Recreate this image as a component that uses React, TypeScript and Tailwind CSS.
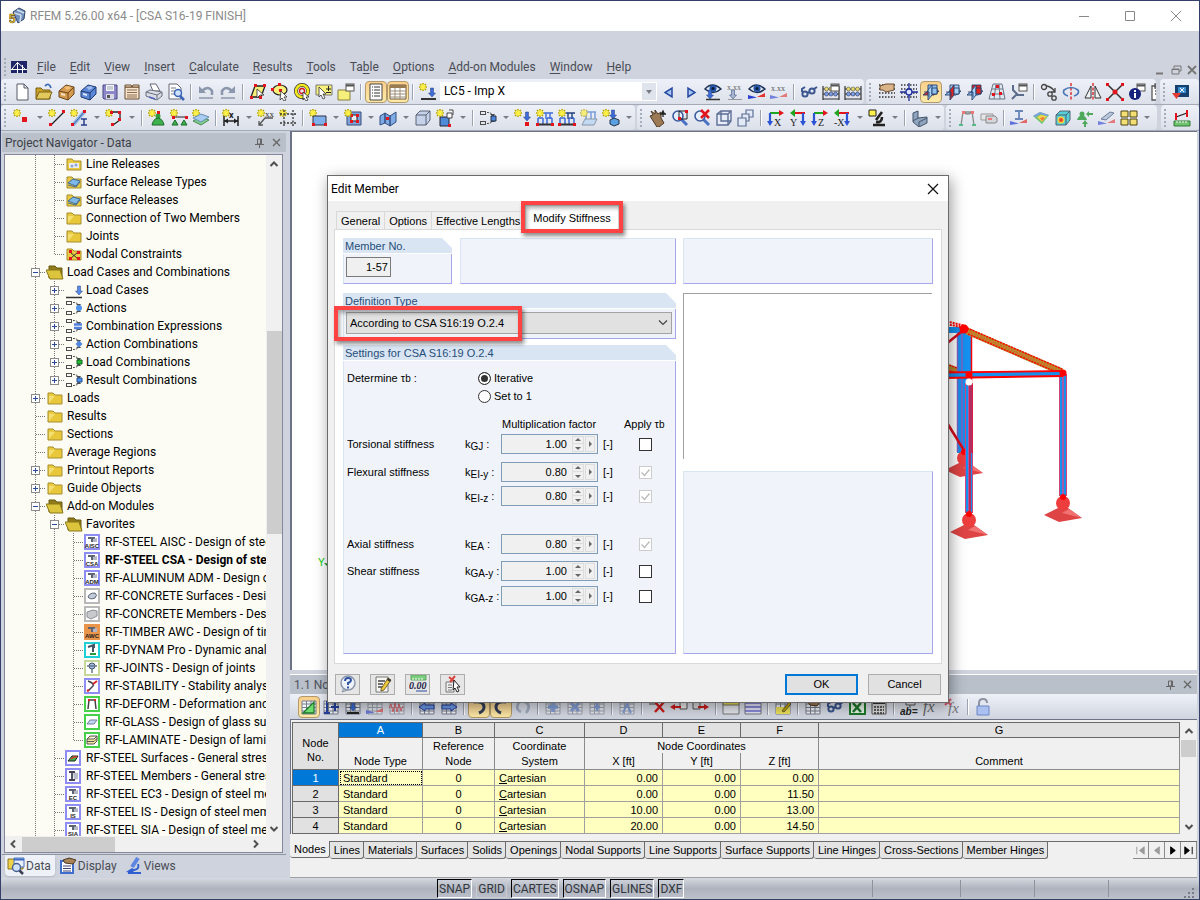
import { useState } from 'react'
import type { ReactNode } from 'react'
import clsx from 'clsx'

/* ---------- icon parts ---------- */

const star = (
  <g>
    <path d="M4 0v8M0 4h8M1 1l6 6M7 1L1 7" stroke="#b8a600" strokeWidth="1.6" />
    <path d="M4 1v6M1 4h6M2 2l4 4M6 2L2 6" stroke="#fff34a" strokeWidth="1.2" />
  </g>
)
const node = (x: number, y: number, fill = '#e3141b') => <rect x={x} y={y} width="3" height="3" fill={fill} />
const gridDots = <path d="M1 2h16M1 6h16M1 10h16M1 14h16" stroke="#333" strokeWidth="1.4" strokeDasharray="1.5 1.5" />
const downArrow = (x: number, y: number, fill = '#3d6bd8') => (
  <path d={`M${x - 1.5} ${y}h3v5h2l-3.5 4-3.5-4h2z`} fill={fill} stroke="#24407f" strokeWidth=".5" />
)
const abacus = (
  <g>
    <path d="M1 3v14M17 3v14M1 16h16M1 6h16M1 11h16" stroke="#333" strokeWidth="1.2" />
    <g fill="#e8d870" stroke="#554" strokeWidth=".6">
      <circle cx="4.5" cy="6" r="2" /><circle cx="9" cy="6" r="2" /><circle cx="13.5" cy="6" r="2" />
    </g>
    <g fill="#7aa0e8" stroke="#335" strokeWidth=".6">
      <circle cx="4.5" cy="11" r="2" /><circle cx="9" cy="11" r="2" /><circle cx="13.5" cy="11" r="2" />
    </g>
  </g>
)
const sheet = <path d="M2 3h14v13H2zM2 6h14M2 9.500h14M2 13h14M6.500 3v13M11 3v13" fill="#f2f4f8" stroke="#777d8c" />
const smallWindow = (
  <g>
    <rect x="9" y="1" width="8" height="7" fill="#fff" stroke="#555" />
    <path d="M9 2.500h8" stroke="#555" strokeWidth="2" />
  </g>
)
const truss = (fill: string) => (
  <g>
    <path d="M2 16V9M7 16V9M11 16V9M16 16V9M2 9h5M11 9h5" stroke="#3d6bd8" strokeWidth="1.5" fill="none" />
    <path d="M1 15.500h16" stroke="#333" strokeWidth="2" />
    <path d="M8 4h9M10 4v6M14 4v6" stroke={fill} strokeWidth="1.4" />
    {node(0, 14)}
    {node(15, 14)}
  </g>
)
// three crossing work planes, one of them marked red
const planes = (back: string, floor: string, side: string) => (
  <g stroke="#25406e" strokeWidth=".9">
    <path d="M6 2h9v9H6z" fill={back} />
    <path d="M1 12l5-4h11l-5 4z" fill={floor} />
    <path d="M6 7l4-5v10l-4 5z" fill={side} />
    <path d="M10 5h5v6h-5z" fill={back} />
    <path d="M2 9h5v5" fill="none" />
  </g>
)
const axes = (letter: string, flip = false) => (
  <g>
    <path d={flip ? 'M16 4H5' : 'M3 4h11'} stroke={flip ? '#e3141b' : '#1fa51f'} strokeWidth="2.200" />
    <path d={flip ? 'M6 0L1 4l5 4z' : 'M12 1l5 3-5 3z'} fill={flip ? '#1fa51f' : '#e3141b'} />
    <path d={flip ? 'M14 4v9' : 'M3 4v9'} stroke="#2b54d6" strokeWidth="2.200" />
    <path d={flip ? 'M11 12h6l-3 5z' : 'M0 12h6l-3 5z'} fill="#2b54d6" />
    <text x={flip ? 1 : 7} y="17" fontSize="10" fontFamily="Liberation Serif, serif" fill="#222">{letter}</text>
  </g>
)
const magnifier = (
  <g>
    <path d="M10 10l6 6" stroke="#4a72c4" strokeWidth="3" />
    <circle cx="7" cy="7" r="5" fill="#e6f0fc" stroke="#3c5b9e" strokeWidth="1.600" />
  </g>
)
const comboBoxes = (
  <g fill="none" stroke="#4c4c4c">
    <rect x="1.500" y="2.500" width="5" height="3" />
    <rect x="1.500" y="12.500" width="5" height="3" />
    <path d="M8 3.500q4 0 5 2M8 14.500q4 0 5-2" strokeDasharray="2 1" />
    <path d="M11 5h5l-2 3zM11 13h5l-2-3z" fill="#4c4c4c" stroke="none" />
  </g>
)
const eye = (
  <g>
    <path d="M1 6q7-8 16 0-8 7-16 0z" fill="#dfe8f5" stroke="#1d3154" strokeWidth="1.500" />
    <circle cx="9" cy="5.500" r="3.500" fill="#2456a8" />
    <circle cx="9" cy="5.500" r="1.500" fill="#0b1a35" />
  </g>
)
const ramp = (
  <g>
    <path d="M0 16v-4l9 2.500z" fill="#2b3fd6" />
    <path d="M9 14l8-4v4z" fill="#e3342f" />
  </g>
)
const cube = (fill: string) => (
  <g stroke="#4b5666" strokeWidth=".9">
    <path d="M2 6l4-4h10v9l-4 5H2z" fill={fill} />
    <path d="M2 6h10v10M12 6l4-4" fill="none" />
  </g>
)
const binoculars = (
  <g fill="none" stroke="#3c5690" strokeWidth="2">
    <circle cx="5" cy="11" r="2.600" /><circle cx="12" cy="8" r="2.600" />
    <path d="M7 10l3-1M2 9V6l3-2M14 6l3-2" />
  </g>
)

const icons: Record<string, ReactNode> = {
  blank: <path d="M4 1h7l4 4v12H4zM11 1v4h4" fill="#fff" stroke="#555b66" />,
  open: (
    <>
      <path d="M1 5h5l2 2h7v9H1z" fill="#c9a227" stroke="#7a6015" />
      <path d="M1 16l3-7h13l-3 7z" fill="#e2c95c" stroke="#7a6015" />
      <path d="M10 3q4-4 6 2" fill="none" stroke="#3e6bb5" strokeWidth="1.800" />
    </>
  ),
  cabinet: (
    <>
      <path d="M2 8l7-6 8 2v7l-6 6-9-3z" fill="#d69a4e" stroke="#69451b" />
      <path d="M2 8l9 2v7M11 10l6-6" stroke="#69451b" fill="none" />
      <path d="M4 10l4 1v2l-4-1z" fill="#f7e3c4" />
      <path d="M7 4l5-1 2 2-4 2z" fill="#f0c078" />
    </>
  ),
  cabinetBlue: (
    <>
      <path d="M2 8l7-6 8 2v7l-6 6-9-3z" fill="#5c86d6" stroke="#1f3a73" />
      <path d="M2 8l9 2v7M11 10l6-6" stroke="#1f3a73" fill="none" />
      <path d="M4 10l4 1v2l-4-1z" fill="#dbe6fb" />
      <path d="M7 4l5-1 2 2-4 2z" fill="#9dbcf0" />
    </>
  ),
  save: (
    <>
      <path d="M2 2h14v14H3l-1-1z" fill="#8d87c9" stroke="#4a4680" />
      <path d="M5 2h8v6H5z" fill="#f4f6fa" />
      <path d="M5 11h8v5H5z" fill="#d7d9e4" />
      <path d="M6 12h3v3H6z" fill="#555" />
      <path d="M6 4h6M6 6h6" stroke="#9aa" />
    </>
  ),
  report: (
    <>
      <path d="M2 4h14v12H2z" fill="#f6e6d0" stroke="#6b4a2c" />
      <path d="M2 4V2h6l1 2 1-2h6v2z" fill="#f6e6d0" stroke="#6b4a2c" />
      <path d="M4 7h10M4 9.500h10M4 12h10M4 14h10" stroke="#8b6a4c" />
    </>
  ),
  print: (
    <>
      <path d="M5 1h6l4 7H8z" fill="#fff" stroke="#667" />
      <path d="M1 9l4-2 12 2v4l-5 4-11-4z" fill="#d9dce4" stroke="#6a6f7e" />
      <path d="M1 9l11 3v4M12 12l5-3" stroke="#6a6f7e" fill="none" />
      <path d="M4 14l6 2" stroke="#5060c0" strokeWidth="1.500" />
    </>
  ),
  preview: (
    <>
      <path d="M2 1h8l4 4v11H2z" fill="#fff" stroke="#667" />
      <path d="M4 5h5M4 8h4M4 11h4" stroke="#778" />
      <path d="M13 13l4 4" stroke="#3b64b8" strokeWidth="2.500" />
      <circle cx="11" cy="10" r="3.500" fill="#cfe2fb" stroke="#3b64b8" strokeWidth="1.500" />
    </>
  ),
  undo: (
    <>
      <path d="M2 3v7h7z" fill="#8b97ad" />
      <path d="M5 8q6-6 10 0v4" fill="none" stroke="#8b97ad" strokeWidth="2.500" />
      <path d="M2 15h14" stroke="#a2aabb" strokeWidth="2" />
    </>
  ),
  redo: (
    <>
      <path d="M16 3v7H9z" fill="#8b97ad" />
      <path d="M13 8Q7 2 3 8v4" fill="none" stroke="#8b97ad" strokeWidth="2.500" />
      <path d="M2 15h14" stroke="#a2aabb" strokeWidth="2" />
    </>
  ),
  selPoly: (
    <>
      <path d="M6 3h10l-4 11H2z" fill="#f6ef7a" stroke="#222" strokeWidth="1.300" />
      {node(5, 1)}{node(14, 1)}{node(1, 13)}{node(10, 13)}
      <path d="M8 6l7 6h-4l-3 3z" fill="#fff" stroke="#333" strokeWidth=".8" />
    </>
  ),
  selEllipse: (
    <>
      <ellipse cx="9" cy="7" rx="7" ry="5" fill="#f6ef7a" stroke="#222" strokeWidth="1.200" />
      {node(7, 0)}{node(0, 5)}{node(8, 6)}
      <path d="M10 8l6 6h-3l2 3-2 1-2-3-2 2z" fill="#fff" stroke="#333" strokeWidth=".8" />
    </>
  ),
  selRing: (
    <>
      <circle cx="9" cy="8" r="6" fill="none" stroke="#333" strokeWidth="4" />
      <circle cx="9" cy="8" r="6" fill="none" stroke="#f2e61c" strokeWidth="2.600" />
      <circle cx="9" cy="8" r="2.500" fill="none" stroke="#e3141b" strokeWidth="1.300" />
      <path d="M10 9l6 5h-3l2 3-2 1-2-3-1 2z" fill="#fff" stroke="#333" strokeWidth=".8" />
    </>
  ),
  selBox: (
    <>
      <path d="M1 2h16v10H1z" fill="#f6ef7a" stroke="#777" />
      <path d="M11 6h5M13.500 3v5M11 9.500h5" stroke="#222" />
      <path d="M4 4l7 7H8l2 4-2 1-2-4-2 2z" fill="#fff" stroke="#333" strokeWidth=".8" />
    </>
  ),
  windows: (
    <>
      <path d="M1 7h12v10H1z" fill="#f6ef7a" stroke="#86813b" />
      {smallWindow}
    </>
  ),
  list: (
    <>
      <path d="M3 1h12v16H3z" fill="#fff" stroke="#444" />
      <path d="M7 4h6M7 7h6M7 10h6M7 13h6" stroke="#333" />
      <path d="M5 4h1M5 7h1M5 10h1M5 13h1" stroke="#333" />
    </>
  ),
  tableView: (
    <>
      <path d="M1 2h16v14H1z" fill="#fff" stroke="#6d563a" />
      <path d="M1 2h16v3H1z" fill="#9a7a50" />
      <path d="M1 8h16M1 11h16M1 14h16M6 5v11M11 5v11" stroke="#9b8d78" />
    </>
  ),
  loadCase: <>{star}{downArrow(13, 5)}<path d="M2 16h15" stroke="#333" strokeWidth="2" /></>,
  prev: <path d="M12 5v9L5 9.500z" fill="#a9c6f6" stroke="#2448a0" strokeWidth="1.500" />,
  next: <path d="M6 5v9l7-4.500z" fill="#a9c6f6" stroke="#2448a0" strokeWidth="1.500" />,
  eyeLoad: <>{eye}{downArrow(6, 7)}<path d="M2 16.500h14" stroke="#333" strokeWidth="1.500" /></>,
  xxLoad: (
    <>
      <text x="1" y="7" fontSize="8" fontFamily="Liberation Serif, serif" fill="#666">x.xx</text>
      {downArrow(7, 7, '#a9b5cc')}
      <path d="M2 16.500h14" stroke="#999" />
    </>
  ),
  eyeRamp: <>{eye}{ramp}</>,
  xxRamp: (
    <>
      <text x="1" y="8" fontSize="8" fontFamily="Liberation Serif, serif" fill="#555">x.xx</text>
      <g opacity=".6">{ramp}</g>
    </>
  ),
  binoculars,
  abacusWin: <>{abacus}{smallWindow}</>,
  abacus,
  gridHand: <>{gridDots}<path d="M2 3l6-2h8v6l-8 2-3-2H2z" fill="#d9b48a" stroke="#6b4c2c" /></>,
  gridCross: <>{gridDots}<path d="M9 0v18M0 9h18" stroke="#1d2c9a" strokeWidth="1.300" /><circle cx="9" cy="9" r="3" fill="#dfe6ff" stroke="#1d2c9a" strokeWidth="1.300" /></>,
  planeA: planes('#8ec1ee', '#e3241f', '#a9d0f5'),
  planeB: planes('#a9d0f5', '#8ec1ee', '#e3241f'),
  planeC: planes('#e3241f', '#8ec1ee', '#a9d0f5'),
  gridSkew: (
    <>
      <path d="M5 1h9l3 15H1zM4 6h11M3 11h13M8 1L6 16M11 1l1 15" fill="#dfe9f2" stroke="#6c7686" />
      {node(8, 2)}{node(4, 10)}{node(11, 9)}
    </>
  ),
  settings: <>{smallWindow}<path d="M3 2v5l5 5M2 16l4-4h8" fill="none" stroke="#5a6b8c" strokeWidth="2" /></>,
  copyNode: (
    <g fill="none" stroke="#444" strokeWidth="1.300">
      <circle cx="4" cy="4" r="2.500" /><circle cx="10" cy="11" r="2.200" /><circle cx="14" cy="15" r="2.200" />
      <path d="M7 3q5 1 8 6M15 5v4h-4" />
    </g>
  ),
  rotate: (
    <>
      <path d="M9 0v18" stroke="#d33" strokeDasharray="3 1.500" strokeWidth="1.500" />
      <path d="M6 13Q0 11 2 7q7-5 14 0 2 4-4 6" fill="none" stroke="#4f78b8" strokeWidth="1.700" />
    </>
  ),
  mirror: (
    <>
      <path d="M9 0v18" stroke="#d33" strokeDasharray="3 1.500" strokeWidth="1.500" />
      <path d="M7 3v12H1zM11 3v12h6z" fill="#f0f2f6" stroke="#333" />
    </>
  ),
  split: <><path d="M2 2l14 14M16 2L2 16" stroke="#333" strokeWidth="1.500" />{node(0, 0)}{node(15, 0)}{node(0, 15)}{node(15, 15)}<circle cx="9" cy="9" r="2.500" fill="#e3141b" /></>,
  info: (
    <>
      {smallWindow}
      <circle cx="7" cy="11" r="6" fill="#17227c" />
      <path d="M7 7v2M7 10v5" stroke="#fff" strokeWidth="2" />
    </>
  ),
  clip: <path d="M4 3h12v14H4zM7 1h6v4H7zM7 8h7M7 11h7" fill="#fff" stroke="#555" strokeWidth="1.300" />,
  screen: <><path d="M3 2h14v12H3z" fill="#16406e" /><path d="M6 4h8v6H6z" fill="#3d8fd0" /><path d="M8 5l4 4M12 5L8 9" stroke="#fff" /><path d="M0 10h9l-4.500 6z" fill="#e33a33" /></>,
  nodeNew: <>{star}<rect x="9" y="8" width="5" height="5" fill="#e3141b" /></>,
  lineNew: <>{star}<path d="M3 16L16 3" stroke="#222" strokeWidth="1.300" />{node(1, 14)}{node(14, 1)}</>,
  memberNew: (
    <>
      {star}
      <path d="M3 16L15 2" stroke="#8fb4e8" strokeWidth="3.500" />
      <path d="M3 16L15 2" stroke="#3b5f9e" />
      {node(1, 14)}{node(13, 1)}
      <path d="M11 10h6M14 10v6M11 16h6" stroke="#2b3f8a" strokeWidth="1.500" />
    </>
  ),
  polyNew: <>{star}<path d="M6 3h9v8l-7 5" fill="none" stroke="#222" strokeWidth="1.300" />{node(5, 2)}{node(13, 2)}{node(13, 9)}{node(6, 14)}</>,
  supportNew: <>{star}<circle cx="10" cy="7" r="2.500" fill="#2f9e3f" /><path d="M4 16q1-6 6-7 5 1 6 7z" fill="#3fb04e" stroke="#1b6b28" />{node(9, 2)}</>,
  lineSupport: <>{star}<path d="M3 8h13" stroke="#222" />{node(2, 7)}{node(15, 7)}<path d="M2 16l3-5 3 5zM11 16l3-5 3 5z" fill="#3fb04e" stroke="#1b6b28" /></>,
  surfSupport: <>{star}<path d="M1 12l8-4 8 3-8 5z" fill="#7fcf8a" stroke="#4e8a58" /><path d="M1 9l8-4 8 3-8 5z" fill="#a8cdf0" stroke="#6a8fb6" /></>,
  dimNew: <>{star}<path d="M2 7v10M16 7v10M2 12h14" stroke="#222" strokeWidth="1.500" /><path d="M2 12l4-2.500v5zM16 12l-4-2.500v5z" fill="#222" /><text x="7" y="9" fontSize="9" fontWeight="bold" fill="#222">x</text></>,
  commentNew: <>{star}<text x="8" y="8" fontSize="9" fontFamily="Liberation Serif, serif" fill="#333">xx</text><path d="M16 9H8l-6 7M2 12v4h4" fill="none" stroke="#555" strokeWidth="1.300" /></>,
  guideNew: <>{star}<path d="M5 1v16M14 1v16M1 5h16M1 14h16" stroke="#333" strokeWidth="1.300" strokeDasharray="2 1.500" /></>,
  surfNew: <>{star}<path d="M4 7h13v9H4z" fill="#7fb0ec" stroke="#334" />{node(15, 14)}{node(3, 14)}</>,
  openingNew: <><path d="M3 3h14v13H3z" fill="#7da4dc" stroke="#3b4f78" /><path d="M7 6h6v6H7z" fill="#e7eefa" stroke="#222" />{node(6, 5)}{node(12, 5)}{node(6, 11)}{node(12, 11)}{star}</>,
  foldNew: <><path d="M1 7l5-3v10l-5 2zM6 4l5 3v10l-5-3zM11 7l6-4v10l-6 4z" fill="#7fabe4" stroke="#334d80" />{node(7, 8)}</>,
  solid: cube('#c5d2ea'),
  solidNew: <><path d="M4 8h9v9H4z" fill="#4f8ad8" stroke="#223" /><path d="M11 4h5v5h-5zM13 1h4v5" fill="#fff" stroke="#444" />{node(12, 15)}{star}</>,
  combo: <>{comboBoxes}<path d="M12 7h5v5h-5z" fill="#4f86e0" stroke="#234" /></>,
  nodalLoad: <>{star}{downArrow(13, 3)}<rect x="11" y="13" width="4" height="4" fill="#e3141b" /></>,
  memberLoad: <>{truss('#3d6bd8')}{star}</>,
  memberLoad2: <>{truss('#24407f')}{star}</>,
  surfLoad: <g opacity=".7"><path d="M4 3h12M6 3v9M11 3v9M15 3v9" stroke="#4a7fd0" strokeWidth="1.500" /><path d="M2 16l3-6h12l-3 6z" fill="#b6d4f4" stroke="#678" />{star}</g>,
  solidLoad: <>{star}{downArrow(11, 1)}<path d="M8 11l4-2 5 2v4l-5 2-4-2z" fill="#5aa0e0" stroke="#234" /></>,
  hand: <><path d="M1 7l3-1-2-4 4 3V1l3 4 3-2v6l3 5-5 4H8z" fill="#9b7a55" stroke="#4c3822" /><path d="M11 5h6M14 2v6M14 2l-1 2h2z" stroke="#222" strokeWidth="1.300" /></>,
  zoomWin: <>{magnifier}<path d="M8 2h8v8H8z" fill="none" stroke="#222" />{node(14, 1)}{node(7, 8)}</>,
  zoomX: <>{magnifier}<path d="M8 1l8 8M16 1L8 9" stroke="#e3141b" strokeWidth="2.500" /></>,
  wire: <g fill="none" stroke="#5d6f96" strokeWidth="1.400"><path d="M2 5l4-3h10v10l-3 4H2z" fill="#e7edf8" /><path d="M2 5h11v11M13 5l3-3M6 2v10h10" /></g>,
  cascade: <g fill="#e3eaf7" stroke="#5d6f96" strokeWidth="1.200"><path d="M9 1h7v7H9z" /><path d="M5 5h7v7H5z" /><path d="M1 9h8v8H1z" /></g>,
  axisX: axes('X'),
  axisY: axes('Y', true),
  axisZ: axes('Z'),
  axisMinusX: axes('-X', true),
  microscope: <><path d="M14 3l-6 8M5 16h12M8 13q6 1 6-5" stroke="#222" strokeWidth="2.600" fill="none" /><path d="M1 1h7v6H1z" fill="#fff34a" stroke="#222" /></>,
  solidView: <><path d="M2 4l5-2v7l9-1v6l-8 4-6-5z" fill="#8ea5bd" stroke="#43546b" /><path d="M7 9l-5 3M8 18v-5l8-4" stroke="#43546b" fill="none" /></>,
  deform: <><path d="M3 16L5 3h9l2 13M5 3q5 4 9 0" fill="none" stroke="#8a8a8a" strokeWidth="1.300" />{node(4, 2, '#e77')}{node(13, 2, '#e77')}<path d="M1 16h4M14 16h4" stroke="#5b8" strokeWidth="2" /></>,
  device: <><path d="M1 5h12v6H1z" fill="#e6e6e6" stroke="#999" /><path d="M6 7h9l2 2v4l-2 1H6z" fill="#d3d5da" stroke="#888" /><path d="M8 10h4" stroke="#e77" strokeWidth="2" /></>,
  sectionRamp: <><path d="M5 2h8M9 2v8M5 10h8" stroke="#6b86b8" strokeWidth="1.800" /><g opacity=".7">{ramp}</g></>,
  contour: <><path d="M1 7l7-4 9 3-7 9z" fill="#6fc36f" /><path d="M5 8l4-2 6 1-5 6z" fill="#f0d84a" /><path d="M8 9l3-1 2 1-3 3z" fill="#ef7b3c" /><path d="M1 7l7-4 9 3-2 1-7-2-4 3z" fill="#7c9fe6" /></>,
  contourCube: <>{cube('#55cfd8')}<circle cx="7" cy="11" r="3.500" fill="#f3d33c" /><circle cx="7" cy="11" r="2" fill="#e8452f" /></>,
  supportForces: <g fill="#4fa85c"><circle cx="6" cy="5" r="2.500" /><path d="M1 11q1-4 5-5 4 1 5 5zM10 5l3-3v2h4v2h-4v2zM8 18v-3H6l3-4 3 4h-2v3z" /></g>,
  sectionCut: <><path d="M3 10l9-7 4 1-8 7z" fill="#b9c8dc" stroke="#6c7d96" /><g opacity=".6">{ramp}</g></>,
  panels: <g fill="#f3df73" stroke="#4d4416"><path d="M1 2h7v6H1z" /><path d="M10 2h7v6h-7z" /><path d="M1 10h7v6H1z" /><path d="M10 10h7v6h-7z" /></g>,
  measure: <><path d="M3 8l11-4" stroke="#222" strokeWidth="1.300" /><path d="M3 4v7M14 1v7" stroke="#e3141b" strokeWidth="2" /><path d="M1 12h16v5H1z" fill="#6fc36f" stroke="#2f7a35" /><path d="M4 12v2M7 12v2M10 12v2M13 12v2" stroke="#fff" /></>,

  // table toolbar
  triangle: <>{sheet}<path d="M3 15L14 4v11z" fill="#6fdc6f" stroke="#1d7a2a" strokeWidth="1.300" /></>,
  rowAdd: <>{sheet}<path d="M5 3v12M2 15h6M13 5v8M9 9h8" stroke="#24409a" strokeWidth="2" /></>,
  rowDown: <>{sheet}{downArrow(9, 4)}<path d="M3 15h12" stroke="#222" strokeWidth="2" /></>,
  rowRamp: <g opacity=".6">{sheet}{ramp}</g>,
  rowWave: <g opacity=".6">{sheet}<path d="M1 10l2-4 2 8 2-9 2 9 2-8 2 7 2-5" fill="none" stroke="#e3141b" /></g>,
  colPrev: <>{sheet}<path d="M1 9l6-4v2h9v4H7v2z" fill="#6f9bea" stroke="#24409a" /></>,
  colNext: <>{sheet}<path d="M17 9l-6-4v2H2v4h9v2z" fill="#6f9bea" stroke="#24409a" /></>,
  loopA: <path d="M4 4q10-1 10 5 0 4-5 6" fill="none" stroke="#333f58" strokeWidth="3" />,
  loopB: <path d="M14 4Q4 3 4 9q0 4 5 6" fill="none" stroke="#333f58" strokeWidth="3" />,
  loopC: <path d="M6 3q-6 8 1 11M12 15q6-8-1-11" fill="none" stroke="#a4afc4" strokeWidth="2.600" />,
  cellPlus: <g opacity=".6">{sheet}<path d="M9 4v10M4 9h10" stroke="#4d77cf" strokeWidth="3.500" /></g>,
  cellTimes: <g opacity=".6">{sheet}<path d="M5 5l8 8M13 5l-8 8" stroke="#4d77cf" strokeWidth="3" /></g>,
  cellDots: <g opacity=".6">{sheet}<path d="M9 5v3M9 10v3M6 9h6" stroke="#4d77cf" strokeWidth="2.500" /></g>,
  cellCaret: <g opacity=".6">{sheet}<path d="M5 15l4-9 4 9" fill="none" stroke="#4d77cf" strokeWidth="2" /></g>,
  rowDelete: <><path d="M1 4h9v3H1z" fill="#999" /><path d="M7 4l9 10M16 4L7 14" stroke="#d01c1c" strokeWidth="2.400" /></>,
  rowLeft: <><path d="M10 3h7v8h-7z" fill="#eee" stroke="#555" /><path d="M0 9l5-3v2h6v2H5v2z" fill="#d01c1c" /></>,
  rowRight: <><path d="M1 3h7v8H1z" fill="#ddd" stroke="#555" /><path d="M17 9l-5-3v2H6v2h6v2z" fill="#d01c1c" /></>,
  yellowTable: <><path d="M1 2h16v14H1z" fill="#e6e8ee" stroke="#777" /><path d="M1 2h16v5H1z" fill="#efe04e" stroke="#777" /></>,
  blueTable: <><path d="M1 2h16v14H1z" fill="#e6e6fb" stroke="#777" /><path d="M1 5h16M1 9h16M1 13h16" stroke="#6d6fd0" strokeWidth="1.500" /></>,
  tableEdit: <>{sheet}<path d="M2 9h14v7H2z" fill="#f0e35c" /><path d="M8 13l7-9 2 2-7 8z" fill="#c9a800" stroke="#333" strokeWidth=".7" /></>,
  tableHand: <>{sheet}<path d="M3 3l7-2 6 3-3 4-7-1z" fill="#a47c52" stroke="#4c3822" /></>,
  excel: <><path d="M2 2h15v14H2z" fill="#e9f5ea" stroke="#1d7a2a" strokeWidth="2" /><path d="M5 5l8 9M13 5l-8 9" stroke="#1d7a2a" strokeWidth="2.500" /></>,
  calculator: <><path d="M2 2h14v14H2z" fill="#ddd" stroke="#555" /><path d="M3 3h12v3H3z" fill="#333" /><path d="M4 9h10M4 12h10M4 15h10" stroke="#333" strokeWidth="1.600" strokeDasharray="2 1" /></>,
  formula: <><path d="M6 2h9v5H6zM10 7v3" fill="none" stroke="#555" /><text x="0" y="17" fontSize="10" fontStyle="italic" fontWeight="bold" fontFamily="Liberation Sans, sans-serif" fill="#222">ab=</text></>,
  fx: <text x="1" y="14" fontSize="16" fontStyle="italic" fontFamily="Liberation Serif, serif" fill="#666">fx</text>,
  fxDelete: <><text x="4" y="15" fontSize="15" fontStyle="italic" fontFamily="Liberation Serif, serif" fill="#777">fx</text><path d="M1 1l6 6M7 1L1 7" stroke="#d56" strokeWidth="2" /></>,
  lock: <><path d="M5 8V5q0-4 4-4t4 4" fill="none" stroke="#8c93a3" strokeWidth="2" /><path d="M3 8h12v9H3z" fill="#a9c0f0" stroke="#6c86c4" /></>,

  // dialog buttons
  help: (
    <>
      <path d="M5 13l-2 4 6-2z" fill="#c7d0dd" stroke="#8c98aa" />
      <circle cx="9" cy="8" r="7" fill="#eef3fa" stroke="#8c98aa" strokeWidth="1.500" />
      <path d="M6 6q0-3 3-3t3 2q0 2-3 3v2M9 11.500v2" fill="none" stroke="#2b4f9e" strokeWidth="1.900" />
    </>
  ),
  note: <><path d="M2 2h12v15H2z" fill="#f6f6f4" stroke="#777" /><path d="M4 6h7M4 9h5M4 12h5" stroke="#444" strokeWidth="1.300" /><path d="M7 14l7-11 3 2-7 10-3 1z" fill="#f0c93a" stroke="#5a4a1c" strokeWidth=".8" /><path d="M14 3l3 2-1 2-3-2z" fill="#333" /></>,
  units: <><path d="M2 0h15v5H2z" fill="#7ccf7c" stroke="#4b9a50" strokeWidth=".8" /><path d="M4 3v2M7 3v2M10 3v2M13 3v2" stroke="#fff" /><text x="0" y="14" fontSize="10" fontStyle="italic" fontWeight="bold" fontFamily="Liberation Serif, serif" fill="#224">0.00</text><path d="M7 16h11" stroke="#2b4f9e" /></>,
  pick: <><path d="M2 7h8v10H2z" fill="#eee" stroke="#777" /><path d="M4 10h4M4 12.500h4M4 15h4" stroke="#777" /><path d="M5 2l6 5M11 1L6 7" stroke="#d9453f" strokeWidth="2" /><path d="M10 5l6 7h-3l2 4-2 1-2-4-2 2z" fill="#fff" stroke="#222" /></>,

  // tree
  folder: <><path d="M2 4h5l2 2h7v9H2z" fill="#e9cb42" stroke="#a88c28" /><path d="M3 7h12v7H3z" fill="#f4df72" /><path d="M9 7h6v7H3z" fill="#e8c73a" /></>,
  folderOpen: <><path d="M3 3h6l2 2h5v10H3z" fill="#8f7b1a" stroke="#6b5a10" /><path d="M0 7h14l3 9H4z" fill="#dcc43c" stroke="#8a7618" /></>,
  folderLine: <><path d="M2 4h5l2 2h7v9H2z" fill="#e9cb42" stroke="#a88c28" /><path d="M4 8h10v5H4z" fill="#e9eef8" /><circle cx="7" cy="11" r="1.500" fill="#8fa4cf" /><circle cx="11" cy="10" r="1.500" fill="#8fa4cf" /></>,
  folderSurf: <><path d="M2 4h5l2 2h7v9H2z" fill="#e9cb42" stroke="#a88c28" /><path d="M3 10l5-4 7 2-4 5z" fill="#7db8e6" stroke="#416a99" /><path d="M3 12l8 2 4-5" fill="none" stroke="#416a99" /></>,
  folderNode: <><path d="M2 4h5l2 2h7v9H2z" fill="#e9cb42" stroke="#a88c28" /><path d="M5 7l8 7M13 7l-8 7" stroke="#333" />{node(4, 5)}{node(12, 6)}{node(4, 12)}{node(12, 12)}</>,
  loadCaseTree: <>{downArrow(14, 5, '#5b8be8')}<path d="M1 16.500h16" stroke="#333" strokeWidth="1.500" /></>,
  comboCircle: <>{comboBoxes}<circle cx="14" cy="9" r="3" fill="#4f93ee" /></>,
  comboEqual: <>{comboBoxes}<path d="M9 7.500h8M9 11h8" stroke="#4f7fe0" strokeWidth="2.400" /></>,
  comboDiamond: <>{comboBoxes}<path d="M14 5.500l3.500 3.500-3.500 3.500L10.500 9z" fill="#4f86e0" /></>,
  comboGreen: <>{comboBoxes}<path d="M12 7h5v4h-5z" fill="#23c033" stroke="#0f5c1a" /></>,
  comboBlue: <>{comboBoxes}<path d="M12 7h5v4h-5z" fill="#4f93ee" stroke="#234f93" /></>,
  dataTab: <><path d="M1 2h6l1 2h8v8H1z" fill="#f0d24a" stroke="#8c7420" /><path d="M7 1h10v9H7z" fill="#e9f0fb" stroke="#4b74c0" /><path d="M7 2.500h10" stroke="#3c68be" strokeWidth="2" /><path d="M12 13l4 4" stroke="#3a3f55" strokeWidth="2.500" /><circle cx="9.500" cy="10.500" r="4" fill="#cfe2fb" stroke="#46608f" strokeWidth="1.400" /></>,
  displayTab: <><path d="M2 4h12v12H2z" fill="#fff" stroke="#3f6ecf" strokeWidth="2" /><path d="M4 9h8M4 11.500h8M4 14h8" stroke="#447" /><path d="M4 3l6-2 7 2-3 4-8-1z" fill="#a98358" stroke="#4c3822" /></>,
  viewsTab: <><path d="M13 1L7 10" stroke="#5c86e0" strokeWidth="4" /><path d="M9 13q6-1 4-6M3 16h13" stroke="#2f5fd0" strokeWidth="2" /><path d="M1 15l6-4 3 2-3 3z" fill="#2f5fd0" /></>,
}

function Glyph({ name }: { name: string }) {
  return (
    <svg viewBox="0 0 18 18" className="size-[18px] shrink-0" fill="none" aria-hidden="true">
      {icons[name]}
    </svg>
  )
}

// framed add-on icons of the tree
function ModuleIcon({ frame, tag, fill = '#fff' }: { frame: string; tag: string; fill?: string }) {
  return (
    <svg viewBox="0 0 16 16" className="size-4 shrink-0" fill="none" aria-hidden="true">
      <rect x="1" y="1" width="14" height="14" fill={fill} stroke={frame} strokeWidth="2" />
      {tag === 'disc' && <path d="M4 9q1-4 7-4 3 2 0 5-5 2-7-1z" fill="#c3cad8" stroke="#5a6374" />}
      {tag === 'block' && <path d="M3 6l6-2 4 1v5l-6 3-4-2z" fill="#c7c9cd" stroke="#8c8f96" />}
      {tag === 'dynam' && <><path d="M4 5l6-2v3M9 4v6" stroke="#456" strokeWidth="2" /><path d="M6 12h6" stroke="#2a9a3a" strokeWidth="2" /></>}
      {tag === 'joint' && <><circle cx="8" cy="6" r="3" fill="#9fb9e8" stroke="#456" /><path d="M3 6h10M8 9v4" stroke="#678" strokeWidth="1.500" /></>}
      {tag === 'stab' && <><path d="M4 3q8 3 4 6l-4 4" stroke="#445" strokeWidth="1.500" /><path d="M9 6l4-3M3 13l2-1" stroke="#d22" strokeWidth="2" /></>}
      {tag === 'frame' && <><path d="M4 13L5 4h6l1 9" stroke="#444" strokeWidth="1.500" /><path d="M4 4h2M10 4h2" stroke="#d22" strokeWidth="2" /></>}
      {tag === 'glass' && <path d="M3 10l3-4h7l-3 4z" fill="#c3d6f5" stroke="#6d7f9c" />}
      {tag === 'layers' && <path d="M3 7l3-3h7l-3 3zM3 7v5h7l3-3V4M3 9.500h7l3-3" fill="#f2e6a0" stroke="#555" />}
      {tag === 'rainbow' && <><path d="M3 11l4-5h6l-3 5z" fill="#38b54a" stroke="#222" /><path d="M6 9l3-2h3" stroke="#e8322b" strokeWidth="1.500" /></>}
      {tag === 'beam' && <><path d="M8 4l5 1v6l-4 1z" fill="#b9bec8" /><path d="M4 4h6M7 4v7M4 12h6" stroke="#445" strokeWidth="1.800" /></>}
      {tag === tag.toUpperCase() && (
        <>
          <path d="M4 3h7v2H9v3H7V5H4z" fill="#5c6474" />
          <path d="M9 5l4-1v4H9z" fill="#b3b8c4" />
          <text x="8" y="14" fontSize="6" fontWeight="bold" textAnchor="middle" fontFamily="Liberation Sans, sans-serif" fill="#222">{tag}</text>
        </>
      )}
    </svg>
  )
}

/* ---------- toolbars ---------- */

// '|' separator, 'v' drop-down arrow, '*' prefix for a pressed button
function ToolItems({ items }: { items: string }) {
  return (
    <>
      {items.split(' ').map((item, i) => {
        if (item === '|') return <span key={i} className="mx-[3px] h-4 w-0.5 shrink-0 border-l border-[#9ba2b0] bg-white" />
        if (item === 'v')
          return (
            <button key={i} aria-label="More" className="flex h-5 w-[13px] shrink-0 items-center justify-center">
              <span className="border-x-3 border-t-3 border-x-transparent border-t-[#777d88]" />
            </button>
          )
        const active = item.startsWith('*')
        const name = item.replace('*', '')
        return (
          <button
            key={i}
            aria-label={name}
            className={clsx(
              'flex size-[22px] shrink-0 items-center justify-center',
              active && 'rounded-sm border border-[#b39a68] bg-linear-to-b from-[#fbcf8c] to-[#fdeaa8]',
            )}
          >
            <Glyph name={name} />
          </button>
        )
      })}
    </>
  )
}

function Grip() {
  return <span className="mr-[3px] ml-[3px] h-[18px] w-1 shrink-0 border-l-2 border-dotted border-[#a4abb9]" />
}

function ToolGroup({ children, last }: { children: ReactNode; last?: boolean }) {
  return (
    <div
      className={clsx(
        'flex h-[25px] items-center overflow-hidden rounded-sm bg-linear-to-b from-[#eef1f8] to-[#dce0ea]',
        last ? 'ml-0.5 flex-1' : 'shrink-0',
      )}
    >
      <Grip />
      {children}
    </div>
  )
}

const menus = [
  ['', 'F', 'ile'], ['', 'E', 'dit'], ['', 'V', 'iew'], ['', 'I', 'nsert'], ['', 'C', 'alculate'], ['', 'R', 'esults'],
  ['', 'T', 'ools'], ['Ta', 'b', 'le'], ['', 'O', 'ptions'], ['', 'A', 'dd-on Modules'], ['', 'W', 'indow'], ['', 'H', 'elp'],
]

function TopBars() {
  return (
    <header className="shrink-0">
      <div className="flex h-[30px] items-center bg-white pl-2 text-[12px] text-[#8b8b8b]">
        <svg viewBox="0 0 18 18" className="size-[18px]" fill="none" aria-hidden="true">
          <path d="M4 5l6-4 6 3-1 8-6 4z" fill="#6f8fbc" stroke="#2d4264" />
          <path d="M5 6l7 2M8 3l7 3M12 8l-1 7" stroke="#cfdcee" strokeWidth="1.500" />
          <text x="0" y="16" fontSize="12" fontWeight="bold" fontFamily="Liberation Sans, sans-serif" fill="#f6cf3a" stroke="#5b4a10" strokeWidth=".6">5</text>
        </svg>
        <h1 className="ml-[3px] flex-1">RFEM 5.26.00 x64 - [CSA S16-19 FINISH]</h1>
        <div className="flex gap-9 pr-[18px]">
          <button aria-label="Minimize"><svg viewBox="0 0 10 10" className="size-[10px]"><path d="M0 5.500h10" stroke="#888" /></svg></button>
          <button aria-label="Maximize"><svg viewBox="0 0 10 10" className="size-[10px]"><path d="M.5.5h9v9h-9z" fill="none" stroke="#888" /></svg></button>
          <button aria-label="Close"><svg viewBox="0 0 10 10" className="size-[10px]"><path d="M0 0l10 10M10 0L0 10" stroke="#888" /></svg></button>
        </div>
      </div>

      <div className="flex h-12 items-end bg-[#cfd3dd]">
        <nav className="flex h-6 flex-1 items-center text-[12px] text-[#494c55]">
          <Grip />
          <svg viewBox="0 0 16 12" className="mr-[10px] h-3 w-4" aria-hidden="true">
            <rect width="16" height="12" fill="#1d2566" />
            <path d="M0 8.500h16M6.500 1v11M11.500 4v8M1 8l5-6M7 2l7 6" stroke="#fff" fill="none" />
          </svg>
          <ul className="flex gap-[14px]">
            {menus.map(([before, key, after]) => (
              <li key={key + after}>
                <button>{before}<span className="underline underline-offset-2">{key}</span>{after}</button>
              </li>
            ))}
          </ul>
        </nav>
        <svg viewBox="0 0 42 10" className="mr-0.5 mb-1 h-[10px] w-[42px]" fill="none" stroke="#777" aria-hidden="true">
          <path d="M1 8.500h7" strokeWidth="2" />
          <path d="M19 3V1h7v5h-2M17 4h7v5h-7zM17 4.500h7" />
          <path d="M33 1l8 8M41 1l-8 8" strokeWidth="1.800" />
        </svg>
      </div>

      <div className="flex h-[26px] gap-0.5 border-b border-[#a4a9b6] bg-[#cfd3dd]">
        <ToolGroup>
          <ToolItems items="blank open cabinet cabinetBlue save report print preview | undo redo | selPoly selEllipse selRing selBox windows | *list *tableView | loadCase" />
          <select aria-label="Load case" className="ml-px h-[19px] w-[201px] appearance-none bg-white pl-1 text-[12px] leading-[19px] text-black">
            <option>LC5 - Imp X</option>
          </select>
          <span className="mr-px flex h-[19px] w-4 items-center justify-center border border-white bg-[#dfe3ec]">
            <span className="border-x-3 border-t-4 border-x-transparent border-t-[#777d88]" />
          </span>
          <ToolItems items="prev next eyeLoad xxLoad eyeRamp xxRamp | binoculars abacusWin abacus" />
        </ToolGroup>
        <ToolGroup>
          <ToolItems items="gridHand gridCross *planeA planeB planeC gridSkew settings | copyNode rotate mirror split info" />
          <span className="flex w-2 overflow-hidden"><Glyph name="clip" /></span>
        </ToolGroup>
        <ToolGroup last>
          <ToolItems items="screen" />
        </ToolGroup>
      </div>

      <div className="flex h-[26px] gap-0.5 border-b border-[#a4a9b6] bg-[#cfd3dd]">
        <ToolGroup>
          <ToolItems items="nodeNew v lineNew memberNew v polyNew v | supportNew lineSupport surfSupport | dimNew v commentNew guideNew | surfNew v openingNew v foldNew v solid solidNew v | combo v nodalLoad memberLoad memberLoad2 surfLoad solidLoad v" />
        </ToolGroup>
        <ToolGroup>
          <ToolItems items="hand zoomWin zoomX wire cascade | axisX axisY axisZ axisMinusX v microscope v | solidView v" />
        </ToolGroup>
        <ToolGroup>
          <ToolItems items="deform device | sectionRamp contour contourCube supportForces sectionCut panels v" />
          <span className="w-1" />
        </ToolGroup>
        <ToolGroup last>
          <ToolItems items="measure" />
        </ToolGroup>
      </div>
    </header>
  )
}

/* ---------- navigator ---------- */

type Box = 'plus' | 'minus' | 'leaf'
type Row = { depth: 1 | 2 | 3; box: Box; icon: ReactNode; label: string; last?: boolean; bold?: boolean }

const row = (depth: 1 | 2 | 3, box: Box, icon: string, label: string, last = false): Row => ({
  depth, box, icon: <Glyph name={icon} />, label, last,
})
const module = (depth: 2 | 3, frame: string, tag: string, label: string, extra: Partial<Row> & { fill?: string } = {}): Row => ({
  depth, box: 'leaf', icon: <ModuleIcon frame={frame} tag={tag} fill={extra.fill} />, label, last: extra.last, bold: extra.bold,
})

const tree: Row[] = [
  row(2, 'leaf', 'folderLine', 'Line Releases'),
  row(2, 'leaf', 'folderSurf', 'Surface Release Types'),
  row(2, 'leaf', 'folderSurf', 'Surface Releases'),
  row(2, 'leaf', 'folder', 'Connection of Two Members'),
  row(2, 'leaf', 'folder', 'Joints'),
  row(2, 'leaf', 'folderNode', 'Nodal Constraints', true),
  row(1, 'minus', 'folderOpen', 'Load Cases and Combinations'),
  row(2, 'plus', 'loadCaseTree', 'Load Cases'),
  row(2, 'plus', 'comboCircle', 'Actions'),
  row(2, 'plus', 'comboEqual', 'Combination Expressions'),
  row(2, 'plus', 'comboDiamond', 'Action Combinations'),
  row(2, 'plus', 'comboGreen', 'Load Combinations'),
  row(2, 'plus', 'comboBlue', 'Result Combinations', true),
  row(1, 'plus', 'folder', 'Loads'),
  row(1, 'leaf', 'folder', 'Results'),
  row(1, 'leaf', 'folder', 'Sections'),
  row(1, 'leaf', 'folder', 'Average Regions'),
  row(1, 'plus', 'folder', 'Printout Reports'),
  row(1, 'plus', 'folder', 'Guide Objects'),
  row(1, 'minus', 'folderOpen', 'Add-on Modules'),
  row(2, 'minus', 'folderOpen', 'Favorites'),
  module(3, '#8d8df5', 'AISC', 'RF-STEEL AISC - Design of steel members'),
  module(3, '#8d8df5', 'CSA', 'RF-STEEL CSA - Design of steel members', { bold: true }),
  module(3, '#8d8df5', 'ADM', 'RF-ALUMINUM ADM - Design of aluminum'),
  module(3, '#b9b9b9', 'disc', 'RF-CONCRETE Surfaces - Design of concrete'),
  module(3, '#b9b9b9', 'block', 'RF-CONCRETE Members - Design of concrete'),
  module(3, '#e8944a', 'AWC', 'RF-TIMBER AWC - Design of timber members', { fill: '#e8944a' }),
  module(3, '#1fd0d6', 'dynam', 'RF-DYNAM Pro - Dynamic analysis'),
  module(3, '#c5d79a', 'joint', 'RF-JOINTS - Design of joints'),
  module(3, '#8d8df5', 'stab', 'RF-STABILITY - Stability analysis'),
  module(3, '#45d24a', 'frame', 'RF-DEFORM - Deformation and deflection'),
  module(3, '#45d24a', 'glass', 'RF-GLASS - Design of glass surfaces'),
  module(3, '#45d24a', 'layers', 'RF-LAMINATE - Design of laminate surfaces', { last: true }),
  module(2, '#8d8df5', 'rainbow', 'RF-STEEL Surfaces - General stress analysis'),
  module(2, '#8d8df5', 'beam', 'RF-STEEL Members - General stress analysis'),
  module(2, '#8d8df5', 'EC', 'RF-STEEL EC3 - Design of steel members'),
  module(2, '#8d8df5', 'IS', 'RF-STEEL IS - Design of steel members'),
  module(2, '#8d8df5', 'SIA', 'RF-STEEL SIA - Design of steel members'),
]

function Branch({ box, last }: { box: Box | 'line'; last?: boolean }) {
  return (
    <svg viewBox="0 0 19 18" className="h-[18px] w-[19px] shrink-0" fill="none" aria-hidden="true">
      <path d={last ? 'M9.500 0v10' : 'M9.500 0v18'} stroke="#777" strokeDasharray="1 1" />
      {box !== 'line' && <path d="M10 9.500h9" stroke="#777" strokeDasharray="1 1" />}
      {(box === 'plus' || box === 'minus') && (
        <>
          <rect x="5.500" y="5.500" width="8" height="8" fill="#fff" stroke="#8c8c8c" />
          <path d={box === 'plus' ? 'M7 9.500h5M9.500 7v5' : 'M7 9.500h5'} stroke="#2b4b9b" />
        </>
      )}
    </svg>
  )
}

function Chevron({ turn = '' }: { turn?: string }) {
  return (
    <svg viewBox="0 0 10 10" className={clsx('size-[10px]', turn)} aria-hidden="true">
      <path d="M1.500 7L5 3.500 8.500 7" fill="none" stroke="#505050" strokeWidth="2" />
    </svg>
  )
}

function PanelButtons() {
  return (
    <span className="flex items-center gap-2 pr-[5px]">
      <svg viewBox="0 0 9 10" className="h-[10px] w-[9px]" fill="none" stroke="#666"><path d="M2.500 1h4v5h-4zM0 6.500h9M4.500 7v3M5.500 1v5" /></svg>
      <svg viewBox="0 0 9 9" className="size-[9px]" stroke="#666" strokeWidth="1.300"><path d="M1 1l7 7M8 1L1 8" /></svg>
    </span>
  )
}

function Navigator() {
  const [tab, setTab] = useState('Data')
  return (
    <aside className="flex w-[285px] shrink-0 flex-col overflow-hidden pt-0.5 pl-px">
      <div className="flex h-[19px] shrink-0 items-center justify-between bg-[#b9c0ca] pl-[3px] text-[12px] text-[#3d4048]">
        <h2>Project Navigator - Data</h2>
        <PanelButtons />
      </div>
      <div className="mt-0.5 mr-[3px] ml-0.5 flex min-h-0 flex-1 flex-col border border-[#84889a] bg-[#f0f0f0]">
        <div className="flex min-h-0 flex-1">
          <ul className="min-w-0 flex-1 overflow-hidden bg-[#fcfcf4] pl-[21px] text-[12px] text-black">
            {tree.map((item) => (
              <li key={item.label} className="flex h-[18px] items-center whitespace-nowrap">
                {item.depth > 1 && <Branch box="line" />}
                {item.depth > 2 && <Branch box="line" />}
                <Branch box={item.box} last={item.last} />
                <span className="flex w-[22px] shrink-0 pl-px">{item.icon}</span>
                <span className={item.bold ? 'font-bold' : ''}>{item.label}</span>
              </li>
            ))}
          </ul>
          <div className="flex w-4 shrink-0 flex-col items-center pt-1 pb-0.5">
            <Chevron />
            <div className="h-[162px]" />
            <div className="h-[203px] w-[15px] bg-[#cdcdcd]" />
            <div className="flex-1" />
            <Chevron turn="rotate-180" />
          </div>
        </div>
        <div className="flex h-4 shrink-0 items-center pl-[3px]">
          <Chevron turn="-rotate-90" />
          <div className="ml-1 h-[15px] w-[93px] bg-[#cdcdcd]" />
          <div className="flex-1" />
          <Chevron turn="rotate-90" />
          <div className="w-[21px]" />
        </div>
      </div>
      <div className="mt-px flex h-6 shrink-0 items-start gap-0.5 border-t border-[#8f95a3] pl-[3px] text-[12px] text-[#494c55]">
        {[['Data', 'dataTab'], ['Display', 'displayTab'], ['Views', 'viewsTab']].map(([name, icon]) => (
          <button
            key={name}
            onClick={() => setTab(name)}
            className={clsx('flex h-[21px] items-center gap-px rounded-b-sm pr-1 pl-0.5', tab === name && 'bg-[#eef2f8] shadow-sm')}
          >
            <Glyph name={icon} />{name}
          </button>
        ))}
      </div>
    </aside>
  )
}

/* ---------- model view ---------- */

function Support({ x, y }: { x: number; y: number }) {
  return (
    <g transform={`translate(${x} ${y})`}>
      <path d="M-19 12L-5 5 5 5 19 15-4 19z" fill="#df4444" />
      <path d="M-5 5L-1 10 6 6 19 15-1 10z" fill="#f27272" />
      <circle cy="0" r="7" fill="#ee3d3d" />
      <circle cy="-6" r="3" fill="#f00" />
    </g>
  )
}

function Column({ x, y1, y2 }: { x: number; y1: number; y2: number }) {
  return (
    <g>
      <rect x={x - 4} y={y1} width="8" height={y2 - y1} fill="#1590ee" />
      <path d={`M${x - 3.5} ${y1}V${y2}M${x + 3.5} ${y1}V${y2}`} stroke="#d0447c" />
      <path d={`M${x} ${y1}V${y2}`} stroke="#a35aa8" strokeWidth="2" />
    </g>
  )
}

function ModelView() {
  return (
    <div className="relative min-h-0 flex-1 overflow-hidden border-t border-l-2 border-[#6c7386] bg-white">
      <svg viewBox="291 133 905 535" className="absolute top-0 left-0 h-[535px] w-[905px]" fill="none" aria-hidden="true">
        <path d="M940 366l27 10" stroke="#b58a30" strokeWidth="7" />
        <path d="M940 363l27 10M940 369l27 9" stroke="#f00" strokeWidth="1.500" strokeDasharray="2 1" />
        <path d="M940 331h22" stroke="#1590ee" strokeWidth="6" />
        <path d="M940 321l25 6M940 324l25 5" stroke="#f00" strokeWidth="2" strokeDasharray="2 1" />
        <rect x="956" y="333" width="14" height="121" fill="#1590ee" />
        <path d="M956.500 333v120M961 333v120" stroke="#7d63c0" strokeWidth="1.500" />
        <path d="M970.500 330v124" stroke="#f00" strokeWidth="1.500" />
        <path d="M940 349l24-19M940 414l24 39" stroke="#d80d1c" strokeWidth="2.500" />
        <Support x={963} y={459} />
        <Column x={968} y1={384} y2={514} />
        <path d="M969 384v130M971 384v70" stroke="#e01030" strokeWidth="1.500" />
        <Support x={968} y={521} />
        <Column x={1062} y1={375} y2={497} />
        <Support x={1062} y={504} />
        <path d="M966 332l95 41" stroke="#b98a2c" strokeWidth="7" />
        <path d="M966 329l95 41M967 335l93 40" stroke="#f00" strokeWidth="1.500" strokeDasharray="2 1" />
        <path d="M966 332l95 41" stroke="#f33" strokeDasharray="1 2" />
        <path d="M940 376.500l122-2" stroke="#1590ee" strokeWidth="5" />
        <path d="M940 373.500l122-1.500M940 379l122-2" stroke="#f00" strokeWidth="1.800" />
        <circle cx="963" cy="330" r="4.500" fill="#f00" />
        <circle cx="968" cy="376" r="3.500" fill="#f00" />
        <circle cx="1062" cy="374" r="3.500" fill="#f00" />
        <circle cx="968" cy="383" r="3.500" fill="#fff" />
        <text x="317" y="567" fontSize="10" fontFamily="Liberation Sans, sans-serif" fill="#0c0">Y</text>
        <path d="M323 564l6 1-2 3z" fill="#080" />
      </svg>
    </div>
  )
}

/* ---------- node table ---------- */

const nodes = [
  ['0.00', '0.00', '0.00'],
  ['0.00', '0.00', '11.50'],
  ['10.00', '0.00', '13.00'],
  ['20.00', '0.00', '14.50'],
]
const tableTabs = ['Nodes', 'Lines', 'Materials', 'Surfaces', 'Solids', 'Openings', 'Nodal Supports', 'Line Supports', 'Surface Supports', 'Line Hinges', 'Cross-Sections', 'Member Hinges']

function NodeTable() {
  const [tab, setTab] = useState('Nodes')
  const head = 'border-r border-[#8b8b8b] bg-[#f0f0f0] p-0 text-center font-normal'
  const cell = 'border-r border-b border-[#a0a0a0] bg-[#ffffc0] py-0'
  return (
    <section className="flex shrink-0 flex-col pt-1">
      <div className="flex h-5 items-center justify-between border-t border-white bg-[#b9c0ca] pl-1 text-[12px] text-[#50545e]">
        <h2>1.1 Nodes</h2>
        <PanelButtons />
      </div>
      <div className="flex h-[25px] items-center bg-linear-to-b from-[#eef1f8] to-[#cfd4df] pl-2">
        <ToolItems items="*triangle rowAdd rowDown rowRamp rowWave | colPrev colNext | *loopA *loopB loopC | cellPlus cellTimes cellDots | cellCaret | rowDelete rowLeft rowRight | yellowTable blueTable | tableEdit | tableHand binoculars excel calculator | formula fx fxDelete | lock" />
      </div>
      <div className="flex border-t border-l border-[#6c7386] bg-[#f0f0f0] pt-0.5 pl-px font-['Liberation_Sans',sans-serif] text-[11px] text-black">
        <table className="w-full table-fixed border-separate border-spacing-0 border-t border-l border-[#696969] leading-[14px]">
          <colgroup>
            <col className="w-[46px]" /><col className="w-[84px]" /><col className="w-[72px]" /><col className="w-[90px]" />
            <col className="w-[78px]" /><col className="w-[78px]" /><col className="w-[78px]" /><col />
          </colgroup>
          <thead>
            <tr className="h-[15px]">
              <th rowSpan={3} className="border-r border-b border-[#696969] bg-[#e1e1e1] p-0 pt-2 font-normal">Node<br />No.</th>
              {['A', 'B', 'C', 'D', 'E', 'F', 'G'].map((letter) => (
                <th
                  key={letter}
                  className={clsx('border-r border-b border-[#696969] p-0 font-normal', letter === 'A' ? 'bg-[#0078d7] text-white' : 'bg-[#e1e1e1]')}
                >
                  {letter}
                </th>
              ))}
            </tr>
            <tr className="h-[15px]">
              <th className={head} />
              <th className={head}>Reference</th>
              <th className={head}>Coordinate</th>
              <th className={head} colSpan={3}>Node Coordinates</th>
              <th className={head} />
            </tr>
            <tr className="h-[17px]">
              {['Node Type', 'Node', 'System', 'X [ft]', 'Y [ft]', 'Z [ft]', 'Comment'].map((label) => (
                <th key={label} className={clsx(head, 'border-b')}>{label}</th>
              ))}
            </tr>
          </thead>
          <tbody>
            {nodes.map((coords, i) => (
              <tr key={i} className="h-4">
                <th className={clsx('border-r border-b border-[#696969] p-0 font-normal', i === 0 ? 'bg-[#0078d7] text-white' : 'bg-[#e1e1e1]')}>{i + 1}</th>
                <td className={clsx(cell, 'px-1', i === 0 && 'outline-1 -outline-offset-2 outline-dotted outline-black')}>Standard</td>
                <td className={clsx(cell, 'px-1 text-center')}>0</td>
                <td className={clsx(cell, 'px-1')}><span className="underline">C</span>artesian</td>
                {coords.map((value, j) => <td key={j} className={clsx(cell, 'px-1 text-right')}>{value}</td>)}
                <td className={cell} />
              </tr>
            ))}
          </tbody>
        </table>
        <div className="flex w-[17px] shrink-0 flex-col items-center pt-1 pb-0.5">
          <Chevron />
          <div className="mt-1 h-[17px] w-[15px] bg-[#cdcdcd]" />
          <div className="flex-1" />
          <Chevron turn="rotate-180" />
        </div>
      </div>
      <div className="h-[7px] bg-[#f0f0f0]" />
      <div className="flex h-[18px] border-t border-[#6c6c6c] bg-[#f0f0f0] font-['Liberation_Sans',sans-serif] text-[11px] text-black">
        {tableTabs.map((name) => (
          <button
            key={name}
            onClick={() => setTab(name)}
            className={clsx(
              'h-[17px] shrink-0 rounded-b-[3px] border-r border-b border-[#6c6c6c] pr-[3px] pl-1',
              name === tab ? '-mt-px bg-[#f0f0f0]' : 'bg-[#e4e4e4]',
            )}
          >
            {name}
          </button>
        ))}
        <div className="flex-1" />
        {['M3 3v8M11 3v8L6 7z', 'M10 3v8L5 7z', 'M5 3v8l5-4z', 'M3 3v8l5-4zM11 3v8'].map((d, i) => (
          <button key={d} aria-label={`Scroll tabs ${i + 1}`} className="flex h-[17px] w-4 items-center justify-center border-r border-b border-[#8b8b8b]">
            <svg viewBox="0 0 14 14" className={clsx('size-[13px]', i < 2 ? 'fill-[#9a9a9a] stroke-[#9a9a9a]' : 'fill-black stroke-black')}><path d={d} /></svg>
          </button>
        ))}
      </div>
      <div className="h-[19px] border-b border-[#a0a0a0] bg-[#f0f0f0]" />
    </section>
  )
}

/* ---------- edit dialog ---------- */

function Panel({ title, className, children }: { title?: string; className?: string; children?: ReactNode }) {
  return (
    <div className={clsx('flex flex-col', className)}>
      {title && (
        <h3 className="h-4 border-b border-white bg-[#dae5f4] pl-0.5 leading-4 text-[#1f4e79] [clip-path:polygon(0_0,calc(100%-10px)_0,100%_10px,100%_100%,0_100%)]">
          {title}
        </h3>
      )}
      <div className={clsx('flex-1 border-r border-b border-l border-r-[#a6a6ec] border-b-[#a6a6ec] border-l-[#dae5f4] bg-[#f0f4fa]', !title && 'border-t border-t-[#dae5f4]')}>
        {children}
      </div>
    </div>
  )
}

// red callout frame drawn over a control
function Callout({ className }: { className: string }) {
  return <span className={clsx('pointer-events-none absolute z-10 border-4 border-[#ff4343] shadow-[2px_3px_4px_rgba(0,0,0,0.45),inset_2px_3px_4px_rgba(0,0,0,0.35)]', className)} />
}

function Check({ label, checked, disabled }: { label: string; checked?: boolean; disabled?: boolean }) {
  return (
    <span className="relative flex size-[13px]">
      <input
        type="checkbox"
        aria-label={label}
        defaultChecked={checked}
        disabled={disabled}
        className="peer size-[13px] appearance-none border border-[#333] bg-white disabled:border-[#ccc]"
      />
      <svg viewBox="0 0 13 13" className="pointer-events-none absolute inset-0 hidden peer-checked:block" aria-hidden="true">
        <path d="M2.500 6.500l3 3 5-6" fill="none" stroke={disabled ? '#bbb' : '#333'} strokeWidth="1.300" />
      </svg>
    </span>
  )
}

const factors = [
  { group: 'Torsional stiffness', sub: 'GJ', value: '1.00', locked: false, gap: '' },
  { group: 'Flexural stiffness', sub: 'EI-y', value: '0.80', locked: true, gap: 'mt-2' },
  { group: '', sub: 'EI-z', value: '0.80', locked: true, gap: 'mt-1' },
  { group: 'Axial stiffness', sub: 'EA', value: '0.80', locked: true, gap: 'mt-7' },
  { group: 'Shear stiffness', sub: 'GA-y', value: '1.00', locked: false, gap: 'mt-[7px]' },
  { group: '', sub: 'GA-z', value: '1.00', locked: false, gap: 'mt-[5px]' },
]

function FactorRow({ group, sub, value, locked, gap }: (typeof factors)[number]) {
  const id = `k-${sub}`
  return (
    <div className={clsx('flex h-5 items-center', gap)}>
      <span className="w-[118px]">{group}</span>
      <label htmlFor={id} className="w-9 whitespace-nowrap">k<span className="relative top-0.5 text-[10px]">{sub}</span> :</label>
      <div className="flex h-5 w-[97px] items-center border border-[#7f9db9] bg-[#f0f0f0] pr-0.5">
        <input id={id} readOnly value={value} className="w-0 flex-1 bg-transparent pr-[5px] text-right outline-none" />
        <span className="flex h-4 w-3 flex-col items-center justify-around border border-[#ddd]">
          <span className="border-x-3 border-b-3 border-x-transparent border-b-[#666]" />
          <span className="w-full border-t border-[#ddd]" />
          <span className="border-x-3 border-t-3 border-x-transparent border-t-[#666]" />
        </span>
        <span className="ml-px flex h-4 w-2.5 items-center justify-center border border-[#ddd]">
          <span className="border-y-3 border-l-3 border-y-transparent border-l-[#666]" />
        </span>
      </div>
      <span className="w-[41px] pl-[5px]">[-]</span>
      <Check label={`Apply τb to k${sub}`} checked={locked} disabled={locked} />
    </div>
  )
}

function EditMemberDialog() {
  const radio = "size-[13px] appearance-none rounded-full border border-[#333] bg-white checked:bg-[#333] checked:shadow-[inset_0_0_0_2px_white]"
  return (
    <div
      role="dialog"
      aria-label="Edit Member"
      className="absolute top-[174px] left-[326px] z-20 w-[622px] border border-[#6a6a6a] bg-[#f0f0f0] font-['Liberation_Sans',sans-serif] text-[11px] text-black shadow-[2px_4px_14px_rgba(0,0,0,0.4)]"
    >
      <div className="flex h-[25px] items-center justify-between bg-white pr-[9px] pl-[3px]">
        <h2 className="font-['Roboto','Open_Sans',sans-serif] text-[12px]">Edit Member</h2>
        <button aria-label="Close dialog"><svg viewBox="0 0 12 12" className="size-[12px]"><path d="M1 1l10 10M11 1L1 11" stroke="#111" strokeWidth="1.200" /></svg></button>
      </div>

      <div className="flex h-7 items-end pl-2">
        {['General', 'Options', 'Effective Lengths'].map((name) => (
          <button key={name} className="h-[18px] border-t border-r border-[#d9d9d9] px-1 first:border-l">{name}</button>
        ))}
        <div className="relative">
          <button className="h-6 border-x border-t border-[#d9d9d9] bg-white px-[7px]">Modify Stiffness</button>
          <Callout className="-top-1 -right-1 -bottom-1 -left-1" />
        </div>
      </div>

      <div className="mx-[6px] flex gap-[7px] border border-[#d9d9d9] bg-white px-2 pt-2 pb-[9px]">
        <div className="flex w-[333px] flex-col">
          <div className="flex gap-2">
            <Panel title="Member No." className="h-[46px] w-[109px]">
              <input aria-label="Member No." readOnly value="1-57" className="mt-[3px] ml-0.5 h-5 w-[45px] border border-[#7a7a7a] bg-[#f0f0f0] pr-0.5 text-right" />
            </Panel>
            <Panel className="h-[46px] flex-1" />
          </div>
          <div className="relative mt-[9px]">
            <Panel title="Definition Type" className="h-[46px]">
              <div className="relative mt-[3px] mr-[3px] ml-0.5">
                <select aria-label="Definition Type" className="block h-[22px] w-full appearance-none border border-[#a3a3a3] bg-[#e1e1e1] pl-[3px] text-black">
                  <option>According to CSA S16:19 O.2.4</option>
                </select>
                <svg viewBox="0 0 10 6" className="pointer-events-none absolute top-2 right-1 h-[6px] w-[10px]"><path d="M1 .5l4 4 4-4" fill="none" stroke="#444" strokeWidth="1.200" /></svg>
              </div>
            </Panel>
            <Callout className="top-[13px] -left-[9px] h-[35px] w-[188px]" />
          </div>
          <Panel title="Settings for CSA S16:19 O.2.4" className="mt-[6px] h-[309px]">
            <div className="pl-[3px]">
              <div className="flex pt-2">
                <span className="w-[131px] pt-px">Determine τ<span className="text-[10px]">b</span> :</span>
                <div className="flex flex-col">
                  <label className="flex h-[18px] items-center gap-[3px]"><input type="radio" name="tau" defaultChecked className={radio} />Iterative</label>
                  <label className="flex h-[18px] items-center gap-[3px]"><input type="radio" name="tau" className={radio} />Set to 1</label>
                </div>
              </div>
              <div className="mt-[11px] mb-0.5 flex h-4 items-center">
                <span className="ml-[155px] w-[122px]">Multiplication factor</span>
                <span>Apply τ<span className="text-[10px]">b</span></span>
              </div>
              {factors.map((f) => <FactorRow key={f.sub} {...f} />)}
            </div>
          </Panel>
        </div>
        <div className="flex flex-1 flex-col">
          <Panel className="h-[46px]" />
          <div className="mt-[9px] mr-px h-[166px] border-t border-l border-[#a0a0a0]" />
          <Panel className="mt-3 flex-1" />
        </div>
      </div>

      <div className="flex h-[38px] items-center gap-[10px] px-[7px] pt-0.5">
        {['help', 'note', 'units', 'pick'].map((name) => (
          <button key={name} aria-label={name} className="flex h-[21px] w-[25px] items-center justify-center border border-[#adadad] bg-[#e6e6e6]">
            <Glyph name={name} />
          </button>
        ))}
        <div className="flex-1" />
        <button className="h-[21px] w-[73px] border-2 border-[#0078d7] bg-[#e1e1e1]">OK</button>
        <button className="h-[21px] w-[73px] border border-[#adadad] bg-[#e1e1e1]">Cancel</button>
      </div>
    </div>
  )
}

/* ---------- status bar ---------- */

function StatusBar() {
  return (
    <footer className="flex h-[21px] shrink-0 items-stretch bg-linear-to-b from-[#d6d9e1] via-[#aeb3be] to-[#bcc1ca] text-[12px] text-[#33363d]">
      <div className="w-[436px] shrink-0" />
      <div className="flex items-center gap-1">
        {['SNAP', 'GRID', 'CARTES', 'OSNAP', 'GLINES', 'DXF'].map((name) => (
          <button
            key={name}
            className={clsx('h-[19px] border px-px', name === 'GRID' ? 'border-[#c9ccd3]' : 'border-t-black border-r-white border-b-white border-l-black')}
          >
            {name}
          </button>
        ))}
      </div>
      <div className="flex-1" />
      {['w-[88px]', 'w-[74px]', 'w-[74px]', 'w-[75px]'].map((w, i) => (
        <span key={i} className={clsx('my-0.5 shrink-0 border-l border-[#8e929b]', w)} />
      ))}
      <svg viewBox="0 0 12 12" className="mr-1 size-[12px] self-end" fill="#777c88" aria-hidden="true">
        <path d="M9 1h2v2H9zM9 5h2v2H9zM9 9h2v2H9zM5 5h2v2H5zM5 9h2v2H5zM1 9h2v2H1z" />
      </svg>
    </footer>
  )
}

export default function App() {
  return (
    <div className="relative flex h-screen flex-col overflow-hidden border border-[#35406a] bg-[#cfd3dd] font-['Roboto','Open_Sans',sans-serif] leading-4">
      <TopBars />
      <div className="flex min-h-0 flex-1">
        <Navigator />
        <main className="flex min-w-0 flex-1 flex-col pr-0.5 pl-1">
          <ModelView />
          <NodeTable />
        </main>
      </div>
      <StatusBar />
      <EditMemberDialog />
    </div>
  )
}
